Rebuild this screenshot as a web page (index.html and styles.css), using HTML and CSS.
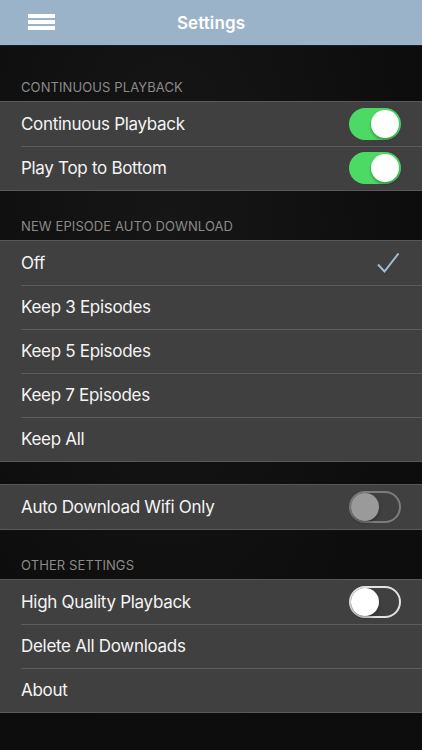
FILE: index.html
```html
<!DOCTYPE html>
<html>
<head>
<meta charset="utf-8">
<link rel="stylesheet" href="styles.css">
</head>
<body>
<div class="app">
  <header class="navbar">
    <div class="menu"><span></span><span></span><span></span></div>
    <div class="title">Settings</div>
  </header>
  <main class="content">
    <div class="section-title first">CONTINUOUS PLAYBACK</div>
    <div class="group">
      <div class="row"><span class="label">Continuous Playback</span><span class="toggle on"><span class="knob"></span></span></div>
      <div class="row"><span class="label">Play Top to Bottom</span><span class="toggle on"><span class="knob"></span></span></div>
    </div>
    <div class="section-title">NEW EPISODE AUTO DOWNLOAD</div>
    <div class="group">
      <div class="row"><span class="label">Off</span>
        <svg class="check" width="24" height="22" viewBox="0 0 24 22"><path d="M2 12.5 L8.5 19.5 L22.5 1.5" fill="none" stroke="#a3bdd2" stroke-width="2"/></svg>
      </div>
      <div class="row"><span class="label">Keep 3 Episodes</span></div>
      <div class="row"><span class="label">Keep 5 Episodes</span></div>
      <div class="row"><span class="label">Keep 7 Episodes</span></div>
      <div class="row"><span class="label">Keep All</span></div>
    </div>
    <div class="spacer"></div>
    <div class="group">
      <div class="row"><span class="label">Auto Download Wifi Only</span><span class="toggle disabled"><span class="knob"></span></span></div>
    </div>
    <div class="section-title">OTHER SETTINGS</div>
    <div class="group">
      <div class="row"><span class="label">High Quality Playback</span><span class="toggle off"><span class="knob"></span></span></div>
      <div class="row"><span class="label">Delete All Downloads</span></div>
      <div class="row"><span class="label">About</span></div>
    </div>
  </main>
</div>
</body>
</html>
```
FILE: styles.css
```css
* { box-sizing: border-box; }
html, body { margin: 0; padding: 0; }
body {
  width: 422px;
  height: 750px;
  overflow: hidden;
  background: #0e0e0e;
  font-family: Inter, "Open Sans", "Liberation Sans", sans-serif;
  color: #f2f2f2;
}
.app { display: flex; flex-direction: column; height: 750px; background: radial-gradient(ellipse at 40% 30%, #161616 0%, #0d0d0d 70%); }
.navbar {
  height: 46px;
  background: #9bb3c8;
  border-bottom: 1px solid #1a1f24;
  display: flex;
  align-items: center;
  justify-content: center;
  position: relative;
}
.menu {
  position: absolute;
  left: 28px;
  top: 14px;
  display: flex;
  flex-direction: column;
  gap: 2px;
}
.menu span { display: block; width: 27px; height: 4px; background: #fff; }
.title { color: #fff; font-size: 17px; font-weight: 600; letter-spacing: 0.1px; }
.content { display: flex; flex-direction: column; }
.section-title {
  height: 49px;
  padding: 0 21px 6px;
  display: flex;
  align-items: flex-end;
  font-size: 13px;
  color: #8a8a8a;
  letter-spacing: 0.1px;
}
.section-title.first { margin-top: 6px; }
.spacer { height: 22px; }
.group {
  background: #404040;
  border-top: 1px solid #595959;
  border-bottom: 1px solid #595959;
}
.row {
  height: 44px;
  display: flex;
  align-items: center;
  justify-content: space-between;
  padding: 0 21px;
  position: relative;
}
.row + .row::before {
  content: "";
  position: absolute;
  left: 21px;
  right: 0;
  top: 0;
  height: 1px;
  background: #5c5c5c;
}
.label { font-size: 17px; color: #f4f4f4; letter-spacing: -0.3px; }
.check { margin-right: 1px; }
.toggle {
  width: 52px;
  height: 32px;
  border-radius: 16px;
  position: relative;
  flex: none;
}
.toggle .knob {
  position: absolute;
  top: 2px;
  width: 28px;
  height: 28px;
  border-radius: 50%;
  background: #fff;
  box-shadow: 0 2px 3px rgba(0,0,0,0.3);
}
.toggle.on { background: #4cd964; }
.toggle.on .knob { right: 2px; }
.toggle.off { border: 2px solid #e2e2e2; background: transparent; }
.toggle.off .knob { left: 0; top: 0; }
.toggle.disabled { border: 2px solid #7c7c7c; background: transparent; }
.toggle.disabled .knob { left: 0; top: 0; background: #9a9a9a; box-shadow: 0 2px 3px rgba(0,0,0,0.3); }
```
